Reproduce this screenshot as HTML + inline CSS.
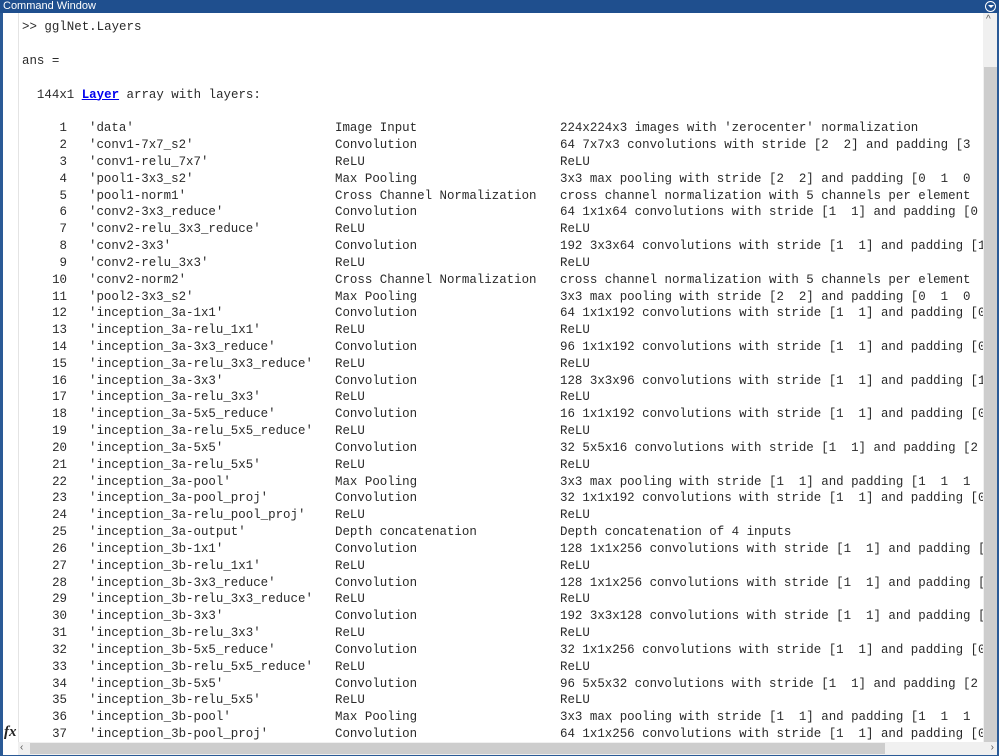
<!DOCTYPE html>
<html><head><meta charset="utf-8"><style>
*{margin:0;padding:0;box-sizing:border-box}
body{width:999px;height:756px;overflow:hidden;background:#2a5a96;position:relative;font-family:"Liberation Mono",monospace;}
#title{position:absolute;left:0;top:0;width:999px;height:13px;background:#1f4f8e;color:#fff;font:11px/13px "Liberation Sans",sans-serif;padding-left:3px}
#ico{position:absolute;right:3px;top:1px;width:11px;height:11px;border:1px solid #fff;border-radius:50%;}
#ico:after{content:"";position:absolute;left:2px;top:3px;border-left:3px solid transparent;border-right:3px solid transparent;border-top:3px solid #fff}
#cw{position:absolute;left:3px;top:13px;width:994px;height:742px;background:#fff;overflow:hidden}
#gut{position:absolute;left:15px;top:0;width:1px;height:729px;background:#e4e4e4}
.l{position:absolute;left:19px;height:17px;font-size:12.45px;line-height:17px;color:#2a2a2a;white-space:pre}
.l span{position:absolute;top:0;white-space:pre}
.a{left:0;width:45px;text-align:right}
.b{left:67px}.c{left:313px}.d{left:538px}
a{color:#0000ee;font-weight:bold;text-decoration:underline}
#vs{position:absolute;left:980px;top:0;width:14px;height:729px;background:#f0f0f0}
#vt{position:absolute;left:1px;top:54px;width:13px;height:675px;background:#cdcdcd}
#hs{position:absolute;left:15px;top:729px;width:979px;height:13px;background:#f0f0f0}
#ht{position:absolute;left:12px;top:1px;width:855px;height:11px;background:#cdcdcd}
.ar{position:absolute;font:10px/12px "Liberation Sans",sans-serif;color:#555}
#fx{position:absolute;left:1px;top:711px;font:italic bold 15px "Liberation Serif",serif;color:#222}
</style></head><body>
<div id="title">Command Window<div id="ico"></div></div>
<div id="cw">
<div id="gut"></div>
<div class="l" style="top:6px">&gt;&gt; gglNet.Layers</div>
<div class="l" style="top:39.8px">ans =</div>
<div class="l" style="top:73.5px">  144x1 <a>Layer</a> array with layers:</div>
<div id="rows"></div>
<div id="vs"><div id="vt"></div><div class="ar" style="left:3px;top:1px">^</div></div>
<div id="hs"><div id="ht"></div><div class="ar" style="left:2px;top:0">&lsaquo;</div><div class="ar" style="right:3px;top:0">&rsaquo;</div></div>
<div id="fx">fx</div>
</div>
<script>
var C="Convolution",R="ReLU",M="Max Pooling",N="Cross Channel Normalization";
function cv(n,k,s,p){return n+" "+k+" convolutions with stride ["+s+"  "+s+"] and padding ["+p+"  "+p+"  "+p+"  "+p+"]";}
var rows=[
["'data'","Image Input","224x224x3 images with 'zerocenter' normalization"],
["'conv1-7x7_s2'",C,cv(64,"7x7x3",2,3)],
["'conv1-relu_7x7'",R,R],
["'pool1-3x3_s2'",M,"3x3 max pooling with stride [2  2] and padding [0  1  0  1]"],
["'pool1-norm1'",N,"cross channel normalization with 5 channels per element"],
["'conv2-3x3_reduce'",C,cv(64,"1x1x64",1,0)],
["'conv2-relu_3x3_reduce'",R,R],
["'conv2-3x3'",C,cv(192,"3x3x64",1,1)],
["'conv2-relu_3x3'",R,R],
["'conv2-norm2'",N,"cross channel normalization with 5 channels per element"],
["'pool2-3x3_s2'",M,"3x3 max pooling with stride [2  2] and padding [0  1  0  1]"],
["'inception_3a-1x1'",C,cv(64,"1x1x192",1,0)],
["'inception_3a-relu_1x1'",R,R],
["'inception_3a-3x3_reduce'",C,cv(96,"1x1x192",1,0)],
["'inception_3a-relu_3x3_reduce'",R,R],
["'inception_3a-3x3'",C,cv(128,"3x3x96",1,1)],
["'inception_3a-relu_3x3'",R,R],
["'inception_3a-5x5_reduce'",C,cv(16,"1x1x192",1,0)],
["'inception_3a-relu_5x5_reduce'",R,R],
["'inception_3a-5x5'",C,cv(32,"5x5x16",1,2)],
["'inception_3a-relu_5x5'",R,R],
["'inception_3a-pool'",M,"3x3 max pooling with stride [1  1] and padding [1  1  1  1]"],
["'inception_3a-pool_proj'",C,cv(32,"1x1x192",1,0)],
["'inception_3a-relu_pool_proj'",R,R],
["'inception_3a-output'","Depth concatenation","Depth concatenation of 4 inputs"],
["'inception_3b-1x1'",C,cv(128,"1x1x256",1,0)],
["'inception_3b-relu_1x1'",R,R],
["'inception_3b-3x3_reduce'",C,cv(128,"1x1x256",1,0)],
["'inception_3b-relu_3x3_reduce'",R,R],
["'inception_3b-3x3'",C,cv(192,"3x3x128",1,1)],
["'inception_3b-relu_3x3'",R,R],
["'inception_3b-5x5_reduce'",C,cv(32,"1x1x256",1,0)],
["'inception_3b-relu_5x5_reduce'",R,R],
["'inception_3b-5x5'",C,cv(96,"5x5x32",1,2)],
["'inception_3b-relu_5x5'",R,R],
["'inception_3b-pool'",M,"3x3 max pooling with stride [1  1] and padding [1  1  1  1]"],
["'inception_3b-pool_proj'",C,cv(64,"1x1x256",1,0)]];
var h="";
rows.forEach(function(r,i){
h+='<div class="l" style="top:'+(107.2+i*16.83).toFixed(2)+'px"><span class="a">'+(i+1)+'</span><span class="b">'+r[0]+'</span><span class="c">'+r[1]+'</span><span class="d">'+r[2]+'</span></div>';});
document.getElementById("rows").outerHTML=h;
</script>
</body></html>
